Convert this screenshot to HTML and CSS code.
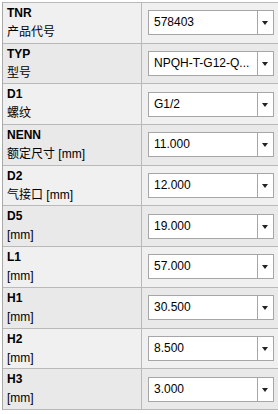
FILE: index.html
```html
<!DOCTYPE html>
<html lang="en">
<head>
    <meta charset="UTF-8">
    <meta name="viewport" content="width=device-width, initial-scale=1.0">
    <title>Parameter Grid</title>
    <link rel="stylesheet" href="styles.css">
</head>
<body>
    <!-- Property grid -->
    <div class="grid">
        <div class="row">
            <div class="label"><b>TNR</b><span>产品代号</span></div>
            <div class="value"><div class="combo"><span class="text">578403</span><span class="arrow"></span></div></div>
        </div>
        <div class="row">
            <div class="label"><b>TYP</b><span>型号</span></div>
            <div class="value"><div class="combo"><span class="text">NPQH-T-G12-Q...</span><span class="arrow"></span></div></div>
        </div>
        <div class="row">
            <div class="label"><b>D1</b><span>螺纹</span></div>
            <div class="value"><div class="combo"><span class="text">G1/2</span><span class="arrow"></span></div></div>
        </div>
        <div class="row">
            <div class="label"><b>NENN</b><span>额定尺寸 [mm]</span></div>
            <div class="value"><div class="combo"><span class="text">11.000</span><span class="arrow"></span></div></div>
        </div>
        <div class="row">
            <div class="label"><b>D2</b><span>气接口 [mm]</span></div>
            <div class="value"><div class="combo"><span class="text">12.000</span><span class="arrow"></span></div></div>
        </div>
        <div class="row">
            <div class="label"><b>D5</b><span>[mm]</span></div>
            <div class="value"><div class="combo"><span class="text">19.000</span><span class="arrow"></span></div></div>
        </div>
        <div class="row">
            <div class="label"><b>L1</b><span>[mm]</span></div>
            <div class="value"><div class="combo"><span class="text">57.000</span><span class="arrow"></span></div></div>
        </div>
        <div class="row">
            <div class="label"><b>H1</b><span>[mm]</span></div>
            <div class="value"><div class="combo"><span class="text">30.500</span><span class="arrow"></span></div></div>
        </div>
        <div class="row">
            <div class="label"><b>H2</b><span>[mm]</span></div>
            <div class="value"><div class="combo"><span class="text">8.500</span><span class="arrow"></span></div></div>
        </div>
        <div class="row">
            <div class="label"><b>H3</b><span>[mm]</span></div>
            <div class="value"><div class="combo"><span class="text">3.000</span><span class="arrow"></span></div></div>
        </div>
    </div>
</body>
</html>
```

FILE: styles.css
```css
* {
    margin: 0;
    padding: 0;
    box-sizing: border-box;
}

body {
    background-color: white;
    font-family: "Liberation Sans", "Noto Sans CJK SC", sans-serif;
    font-size: 12px;
    color: black;
    overflow: hidden;
}

/* Grid frame */
.grid {
    margin: 2px 0 0 2px;
    width: 276px;
    border-top: 1px solid #b9b9b9;
    border-left: 1px solid #a9a9a9;
}

.row {
    display: grid;
    grid-template-columns: 139px 1fr;
    height: 40.7px;
    border-bottom: 1px solid #b9b9b9;
    background-color: #f0f0f0;
}

.row:nth-child(even) {
    background-color: #e9e9e9;
}

/* Left column */
.label {
    display: flex;
    flex-direction: column;
    padding: 1px 0 0 4px;
    border-right: 1px solid #b9b9b9;
    line-height: 19px;
}

.label b {
    font-weight: bold;
}

/* Right column */
.value {
    display: flex;
    align-items: center;
    padding-left: 6px;
}

.combo {
    display: flex;
    width: 126px;
    height: 25px;
    background-color: white;
    border: 1px solid #a6a6a6;
}

.combo .text {
    flex: 1;
    min-width: 0;
    padding-left: 5px;
    line-height: 23px;
    white-space: nowrap;
}

.combo .arrow {
    position: relative;
    width: 16px;
    border-left: 1px solid #a6a6a6;
}

.combo .arrow::after {
    content: "";
    position: absolute;
    left: 4px;
    top: 10px;
    border-left: 3.5px solid transparent;
    border-right: 3.5px solid transparent;
    border-top: 4px solid #222;
}
```
